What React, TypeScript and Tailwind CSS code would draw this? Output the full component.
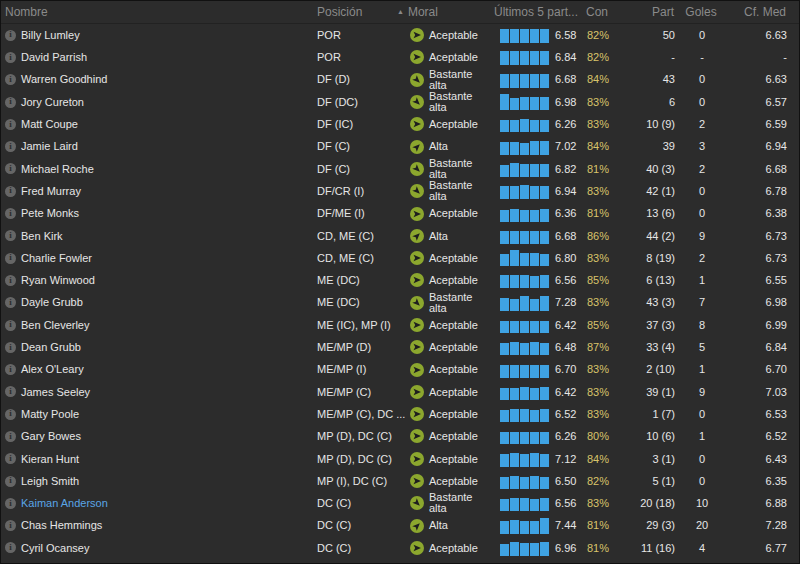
const rows: [string,string,string,string,string,string,string,string,number[]?][] = [
["Billy Lumley","POR","A","6.58","82%","50","0","6.63"],
["David Parrish","POR","A","6.84","82%","-","-","-"],
["Warren Goodhind","DF (D)","B","6.68","84%","43","0","6.63"],
["Jory Cureton","DF (DC)","B","6.98","83%","6","0","6.57",[16,12,13,13,13]],
["Matt Coupe","DF (IC)","A","6.26","83%","10 (9)","2","6.59",[12,12,13,12,12]],
["Jamie Laird","DF (C)","H","7.02","84%","39","3","6.94",[13,13,12,14,14]],
["Michael Roche","DF (C)","B","6.82","81%","40 (3)","2","6.68",[12,14,13,13,13]],
["Fred Murray","DF/CR (I)","B","6.94","83%","42 (1)","0","6.78",[13,13,14,13,13]],
["Pete Monks","DF/ME (I)","A","6.36","81%","13 (6)","0","6.38",[12,13,12,12,13]],
["Ben Kirk","CD, ME (C)","H","6.68","86%","44 (2)","9","6.73",[13,13,13,13,13]],
["Charlie Fowler","CD, ME (C)","A","6.80","83%","8 (19)","2","6.73",[12,16,13,13,12]],
["Ryan Winwood","ME (DC)","A","6.56","85%","6 (13)","1","6.55",[13,13,13,12,13]],
["Dayle Grubb","ME (DC)","B","7.28","83%","43 (3)","7","6.98",[13,12,15,12,15]],
["Ben Cleverley","ME (IC), MP (I)","A","6.42","85%","37 (3)","8","6.99",[12,12,12,12,12]],
["Dean Grubb","ME/MP (D)","A","6.48","87%","33 (4)","5","6.84",[12,13,12,13,12]],
["Alex O'Leary","ME/MP (I)","A","6.70","83%","2 (10)","1","6.70",[13,13,13,13,13]],
["James Seeley","ME/MP (C)","A","6.42","83%","39 (1)","9","7.03",[12,12,13,12,13]],
["Matty Poole","ME/MP (C), DC ...","A","6.52","83%","1 (7)","0","6.53",[12,13,13,12,13]],
["Gary Bowes","MP (D), DC (C)","A","6.26","80%","10 (6)","1","6.52",[12,12,12,12,12]],
["Kieran Hunt","MP (D), DC (C)","A","7.12","84%","3 (1)","0","6.43",[13,14,13,14,13]],
["Leigh Smith","MP (I), DC (C)","A","6.50","82%","5 (1)","0","6.35",[12,13,12,13,12]],
["Kaiman Anderson","DC (C)","B","6.56","83%","20 (18)","10","6.88",[12,13,13,12,13]],
["Chas Hemmings","DC (C)","H","7.44","81%","29 (3)","20","7.28",[13,14,13,13,16]],
["Cyril Ocansey","DC (C)","A","6.96","81%","11 (16)","4","6.77",[12,14,13,13,14]],
];

function MoralIcon({t}:{t:string}){
  const rot = t==="A"?0:t==="B"?45:-45;
  return (
    <svg width="14" height="14" viewBox="0 0 14 14" className="shrink-0">
      <circle cx="7" cy="7" r="7" fill="#8ca72e"/>
      <g transform={`rotate(${rot} 7 7)`}>
        <path d="M3.5 3.8 L11 7 L3.5 10.2 L5.2 7 Z" fill="#1e1e1e"/>
      </g>
    </svg>
  );
}

export default function App(){
  return (
    <div className="w-[800px] h-[564px] bg-[#2c2c2c] overflow-hidden border border-[#111] text-[11px] text-[#e6e6e6]" style={{fontFamily:'"Liberation Sans", Arial, sans-serif'}}>
      <div className="flex items-center h-[23px] text-[#8a8a8a] text-[12px] border-b border-[#222]">
        <div className="w-[316px] pl-[4px]">Nombre</div>
        <div className="w-[80px]">Posición</div>
        <div className="w-[96px] flex items-center"><span className="text-[7px] mr-[4px]">▲</span>Moral</div>
        <div className="w-[93px] pl-[1px]">Últimos 5 part...</div>
        <div className="w-[30px]">Con</div>
        <div className="w-[60px] text-right pr-[2px]">Part</div>
        <div className="w-[50px] text-center">Goles</div>
        <div className="w-[62px] text-right pr-[2px]">Cf. Med</div>
      </div>
      {rows.map((r,i)=>{
        const bars = r[8] ?? [14,14,14,14,14];
        return (
        <div key={i} className="flex items-center h-[22.3px]">
          <div className="w-[316px] flex items-center pl-[4px]">
            <span className="w-[11px] h-[11px] rounded-full bg-[#666] text-[#2c2c2c] text-[9px] font-bold flex items-center justify-center mr-[5px]" style={{fontFamily:"serif"}}>i</span>
            <span className={i===21?"text-[#5aa5e6]":""}>{r[0]}</span>
          </div>
          <div className="w-[92px] whitespace-nowrap overflow-hidden">{r[1]}</div>
          <div className="w-[90px] flex items-center gap-[5px] pl-[1px]">
            <MoralIcon t={r[2]}/>
            {r[2]==="B" ? <span className="leading-[11px]">Bastante<br/>alta</span> : <span>{r[2]==="A"?"Aceptable":"Alta"}</span>}
          </div>
          <div className="w-[56px] flex items-end gap-[1px] h-[16px] pl-[1px]">
            {bars.map((h,j)=><div key={j} className="w-[9px] bg-[#3fa3e3]" style={{height:h}}/>)}
          </div>
          <div className="w-[32px]">{r[3]}</div>
          <div className="w-[30px] text-[#d8c36a]">{r[4]}</div>
          <div className="w-[60px] text-right pr-[2px]">{r[5]}</div>
          <div className="w-[50px] text-center">{r[6]}</div>
          <div className="w-[62px] text-right pr-[2px]">{r[7]}</div>
        </div>);
      })}
    </div>
  );
}
